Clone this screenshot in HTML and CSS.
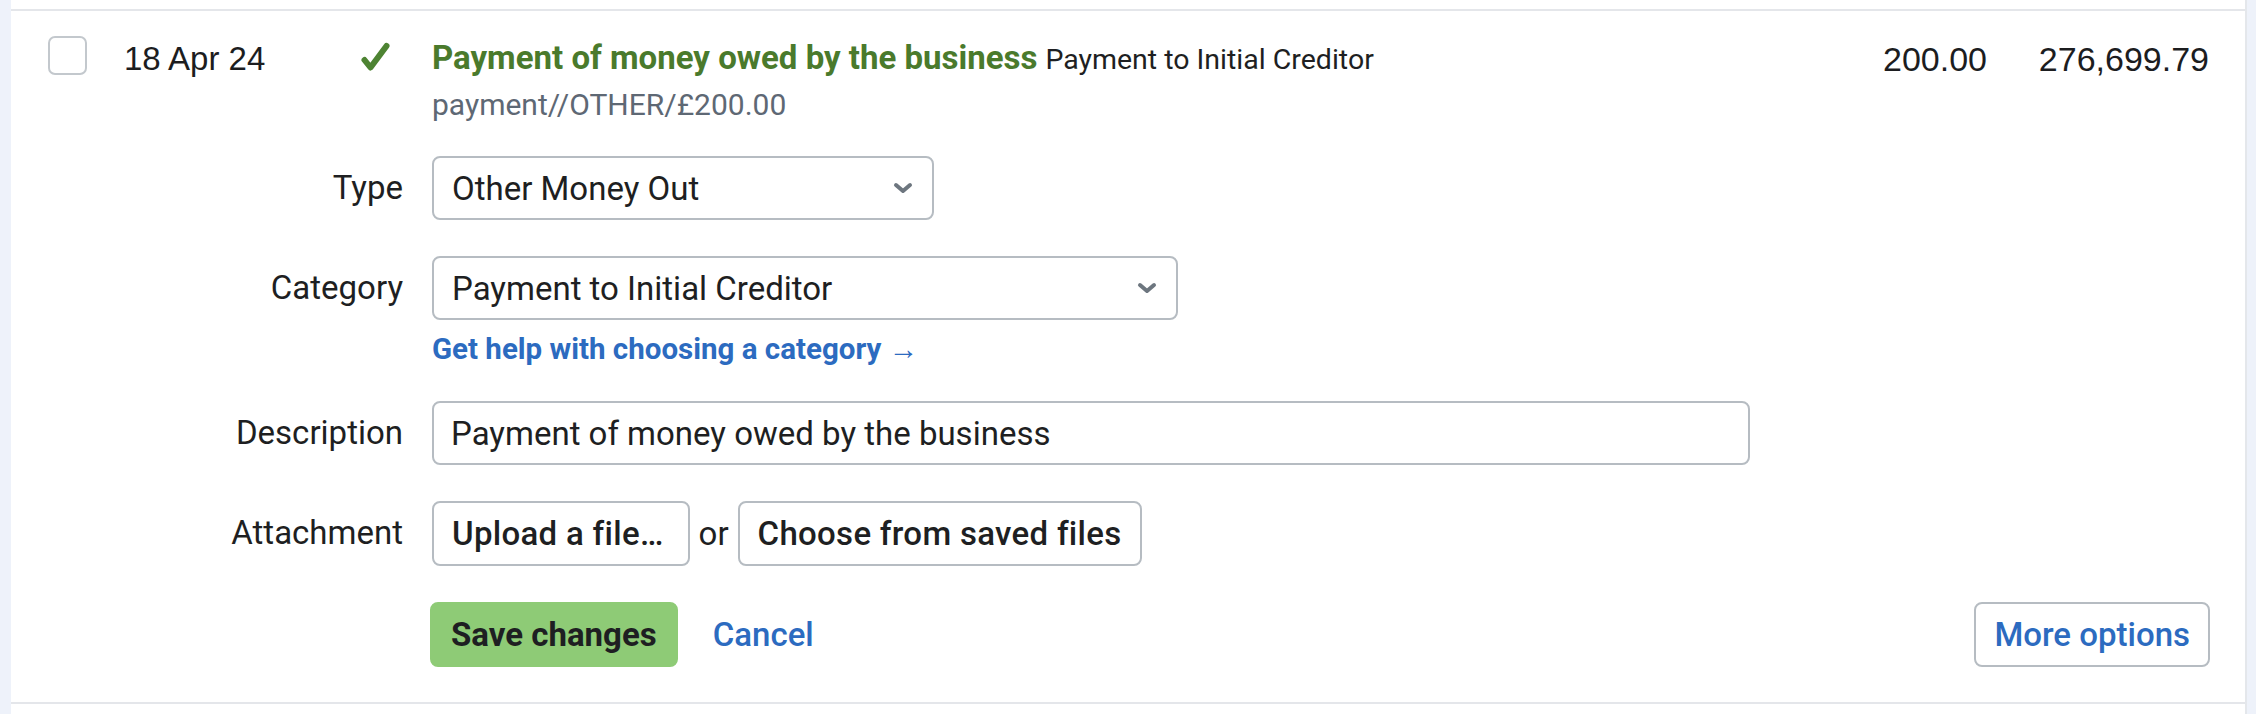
FILE: index.html
```html
<!DOCTYPE html>
<html lang="en">
<head>
<meta charset="utf-8">
<title>Transaction</title>
<link rel="stylesheet" href="styles.css">
</head>
<body>
<div class="panel">
  <div class="txn">
    <div class="txn-head">
      <span class="checkbox"></span>
      <span class="date">18 Apr 24</span>
      <span class="status">
        <svg width="34" height="30" viewBox="0 0 34 30"><path d="M6.5 18 L12.5 25.5 L28.5 4" fill="none" stroke="#4d8332" stroke-width="6" stroke-linecap="round" stroke-linejoin="round"/></svg>
      </span>
      <div class="desc">
        <div class="desc-line"><strong class="title">Payment of money owed by the business</strong> <span class="cat">Payment to Initial Creditor</span></div>
        <div class="ref">payment//OTHER/£200.00</div>
      </div>
      <span class="amount">200.00</span>
      <span class="amount balance">276,699.79</span>
    </div>

    <form class="edit">
      <label class="label">Type</label>
      <div class="field">
        <div class="select select-type"><span>Other Money Out</span>
          <svg class="chev" width="20" height="12" viewBox="0 0 20 12"><path d="M3 3 L10 9 L17 3" fill="none" stroke="#6d767f" stroke-width="4" stroke-linecap="round" stroke-linejoin="round"/></svg>
        </div>
      </div>

      <label class="label">Category</label>
      <div class="field">
        <div class="select select-cat"><span>Payment to Initial Creditor</span>
          <svg class="chev" width="20" height="12" viewBox="0 0 20 12"><path d="M3 3 L10 9 L17 3" fill="none" stroke="#6d767f" stroke-width="4" stroke-linecap="round" stroke-linejoin="round"/></svg>
        </div>
        <a class="help" href="#">Get help with choosing a category <span class="arrow">→</span></a>
      </div>

      <label class="label">Description</label>
      <div class="field">
        <input class="text-input" type="text" value="Payment of money owed by the business">
      </div>

      <label class="label">Attachment</label>
      <div class="field attach">
        <button type="button" class="btn btn-upload">Upload a file…</button>
        <span class="or">or</span>
        <button type="button" class="btn">Choose from saved files</button>
      </div>

      <span class="label"></span>
      <div class="field actions">
        <button type="button" class="btn btn-save">Save changes</button>
        <a class="cancel" href="#">Cancel</a>
        <button type="button" class="btn btn-more">More options</button>
      </div>
    </form>
  </div>
</div>
</body>
</html>
```

FILE: styles.css
```css
* { box-sizing: border-box; }
html, body { margin: 0; padding: 0; }
body {
  background: #eef2fa;
  font-family: Roboto, "Liberation Sans", sans-serif;
  color: #1e1f22;
  height: 714px;
  overflow: hidden;
}
.panel {
  margin: 0 9px 0 11px;
  background: #ffffff;
  border-right: 2px solid #e4e7eb;
  height: 714px;
  padding-top: 9px;
}
.txn {
  border-top: 2px solid #e4e6ea;
  border-bottom: 2px solid #e4e6ea;
  height: 695px;
}
.txn-head {
  display: flex;
  align-items: flex-start;
  padding: 25px 36px 0 37px;
}
.checkbox {
  flex: none;
  width: 39px;
  height: 39px;
  border: 2px solid #c3c8cd;
  border-radius: 7px;
  margin-top: 0;
}
.date {
  flex: none;
  margin-left: 37px;
  width: 234px;
  font-family: "Liberation Sans", Arial, sans-serif;
  font-size: 33px;
  line-height: 44px;
  margin-top: 1px;
  color: #1c1d1f;
}
.status {
  flex: none;
  width: 74px;
  margin-top: 6px;
  display: flex;
}
.status svg { display: block; }
.desc { flex: 1; }
.desc-line { font-size: 32px; line-height: 44px; white-space: nowrap; }
.title {
  font-size: 33px;
  font-weight: 700;
  color: #4a7a2c;
}
.cat { font-size: 28.5px; color: #1e1f22; }
.ref {
  font-size: 30px;
  line-height: 46px;
  color: #5e6874;
}
.amount {
  flex: none;
  width: 150px;
  text-align: right;
  font-family: "Liberation Sans", Arial, sans-serif;
  font-size: 34px;
  line-height: 44px;
  margin-top: 1px;
  color: #1c1d1f;
}
.balance { width: 222px; }

.edit {
  display: grid;
  grid-template-columns: 392px 1fr;
  column-gap: 29px;
  row-gap: 36px;
  margin-top: 28px;
  padding-right: 35px;
  font-size: 33px;
}
.label {
  text-align: right;
  line-height: 64px;
  font-size: 33px;
  color: #1e1f22;
}
.field { display: flex; flex-direction: column; align-items: flex-start; }
.select {
  display: flex;
  align-items: center;
  justify-content: space-between;
  height: 64px;
  padding: 0 19px 0 18px;
  border: 2px solid #b6bcc2;
  border-radius: 8px;
  font-size: 33px;
  background: #fff;
}
.select-type { width: 502px; }
.select-cat { width: 746px; }
.chev { display: block; flex: none; }
.help {
  margin-top: 13px;
  line-height: 32px;
  font-size: 29.5px;
  font-weight: 700;
  color: #2c6bc0;
  text-decoration: none;
}
.help .arrow { font-weight: 400; }
.text-input {
  width: 1318px;
  height: 64px;
  padding: 0 17px;
  border: 2px solid #b6bcc2;
  border-radius: 8px;
  font-family: Roboto, "Liberation Sans", sans-serif;
  font-size: 33px;
  color: #1e1f22;
  background: #fff;
  outline: none;
}
.attach { flex-direction: row; align-items: center; gap: 9px; }
.or { font-size: 33px; }
.btn {
  height: 65px;
  padding: 0 18px;
  border: 2px solid #b6bcc2;
  border-radius: 8px;
  background: #fff;
  font-family: Roboto, "Liberation Sans", sans-serif;
  font-size: 33px;
  font-weight: 500;
  letter-spacing: 0.3px;
  color: #1e1f22;
  cursor: pointer;
}
.btn-upload { padding: 0 24px 0 18px; }
.actions { flex-direction: row; align-items: center; }
.btn-save {
  background: #8ecb76;
  border-color: #8ecb76;
  padding: 0 19px;
  font-weight: 700;
  letter-spacing: 0;
  margin-left: -2px;
}
.cancel {
  margin-left: 35px;
  font-size: 33px;
  font-weight: 500;
  color: #2c6bc0;
  text-decoration: none;
}
.btn-more {
  margin-left: auto;
  padding: 0 18px;
  letter-spacing: 0;
  color: #2c6bc0;
}
```
